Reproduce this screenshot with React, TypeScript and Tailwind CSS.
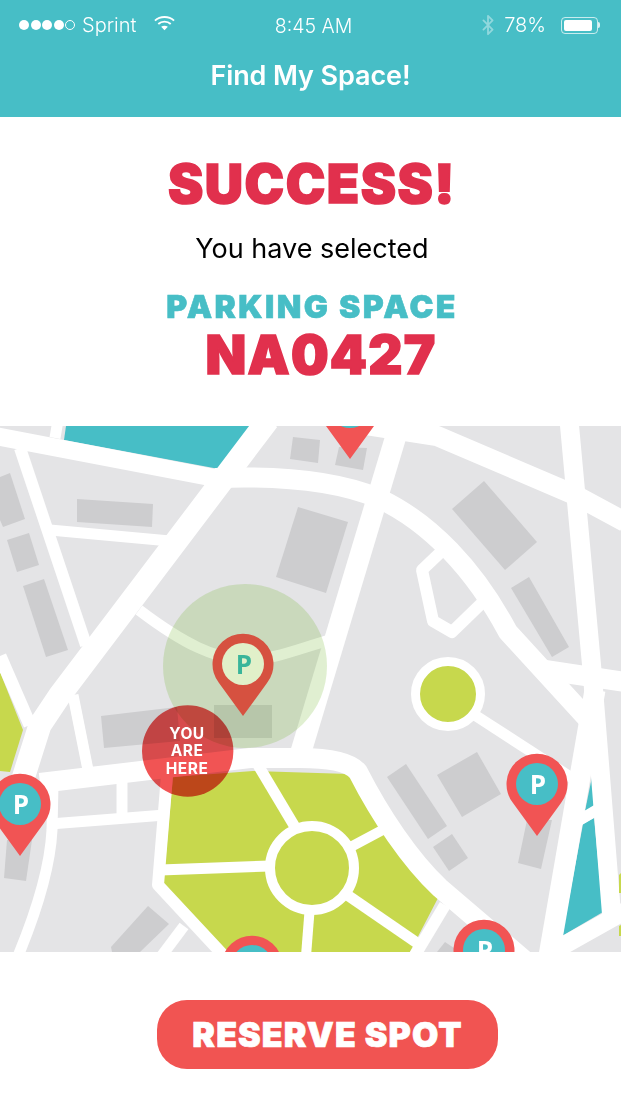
import { BluetoothIcon } from "lucide-react";

const buildings = [
  "293,437 320,440 318,463 290,459",
  "339,447 367,448 363,470 335,465",
  "77,499 153,504 152,527 77,522",
  "0,477 10,473 25,519 3,527 0,520",
  "7,540 29,533 39,565 17,572",
  "23,586 44,579 68,650 46,657",
  "298,507 348,522 326,593 276,577",
  "484,481 537,542 505,570 452,509",
  "529,577 569,647 552,657 511,588",
  "406,764 447,826 428,839 387,777",
  "477,752 501,794 462,817 437,775",
  "452,834 468,858 449,871 433,847",
  "552,820 541,869 518,863 527,820",
  "32,840 26,881 4,878 7,840",
  "445,942 460,952 437,952",
  "148,906 169,924 140,952 112,952 111,947",
  "101,716 177,707 180,741 104,748",
  "214,705 272,705 272,738 214,738",
];

const roads: [string, number][] = [
  ["M-5 436 L215 478", 18],
  ["M215 478 C265 476 330 478 378 498 C430 522 475 570 508 632 L595 727", 20],
  ["M268 420 L60 695 L40 725 L21 785", 23],
  ["M20 448 L86 645", 12],
  ["M58 420 L55 438", 11],
  ["M50 530 L170 541", 11],
  ["M0 656 L30 725", 13],
  ["M139 610 C185 645 215 658 243 660 C275 660 300 648 330 640", 11],
  ["M402 416 L300 755", 21],
  ["M360 424 L437 436 L575 495 L625 522", 20],
  ["M569 420 L592 670 L612 920", 19],
  ["M545 670 L625 682", 20],
  ["M444 549 L422 570 L433 621 L452 632 L485 600", 12],
  ["M470 712 L575 780", 11],
  ["M595 690 L549 956", 21],
  ["M550 953 L625 911", 18],
  ["M578 821 L600 808", 11],
  ["M40 783 L250 758 L300 758 C330 758 350 762 358 772 C380 815 410 860 440 888 L530 965", 20],
  ["M445 905 L415 955", 12],
  ["M258 765 L295 827", 11],
  ["M160 870 L270 866", 11],
  ["M345 850 L390 826", 10],
  ["M340 890 L420 945", 11],
  ["M310 905 L306 956", 10],
  ["M167 775 L158 885 L225 957", 12],
  ["M184 926 L160 958", 11],
  ["M53 785 L52 830 C50 870 35 915 18 956", 11],
  ["M50 824 L165 815", 11],
  ["M122 780 L122 820", 11],
  ["M73 695 L88 770", 11],
];

function Pin({ x, y, fill, inner, mark }: { x: number; y: number; fill: string; inner: string; mark?: string }) {
  return (
    <g transform={`translate(${x} ${y})`}>
      <path d="M0 52 L-24 19 A30.5 30.5 0 1 1 24 19 Z" fill={fill} />
      <circle r="21" fill={inner} />
      {mark && (
        <text x="1" y="9.5" textAnchor="middle" fontSize="26" fontWeight="700" fontFamily="'Open Sans', sans-serif" fill={mark}>
          P
        </text>
      )}
    </g>
  );
}

function CityMap() {
  return (
    <svg viewBox="0 426 621 526" className="block w-[621px] h-[526px] bg-[#e4e4e6]">
      <polygon points="66,426 252,426 219,469 64,440" fill="#47bec6" />
      <polygon points="592,777 585,811 594,806" fill="#47bec6" />
      <polygon points="583,824 562,936 603,912 594,818" fill="#47bec6" />
      <polygon points="0,672 23,730 10,772 0,771" fill="#c7d84d" />
      <polygon points="173,777 253,771 349,774 438,898 410,952 225,952 162,889 165,865" fill="#c7d84d" />
      {buildings.map((b) => (
        <polygon key={b} points={b} fill="#cdcdcf" />
      ))}
      {roads.map(([d, w]) => (
        <path key={d} d={d} fill="none" stroke="#fff" strokeWidth={w} strokeLinejoin="round" />
      ))}
      <polygon points="619,875 621,873 621,893 619,893" fill="#c7d84d" />
      <polygon points="619,926 621,925 621,936 619,936" fill="#c7d84d" />
      <circle cx="312" cy="868" r="42" fill="#c7d84d" stroke="#fff" strokeWidth="10" />
      <circle cx="448" cy="694" r="32.5" fill="#c7d84d" stroke="#fff" strokeWidth="9" />

      <circle cx="245" cy="666" r="82" fill="#5aaa0a" fillOpacity="0.19" />
      <Pin x={243} y={664} fill="#d65140" inner="#e1f0c9" mark="#3ab59a" />

      <circle cx="187.7" cy="751" r="45.7" fill="#f15454" className="mix-blend-multiply" />
      <g textAnchor="middle" fill="#fff" fontSize="15.5" fontWeight="700" letterSpacing="0.5" fontFamily="Inter, sans-serif">
        <text x="187" y="739">YOU</text>
        <text x="187" y="756">ARE</text>
        <text x="187" y="774">HERE</text>
      </g>

      <Pin x={350} y={407} fill="#f15454" inner="#47bec6" />
      <Pin x={20} y={804} fill="#f15454" inner="#47bec6" mark="#fff" />
      <Pin x={537} y={784} fill="#f15454" inner="#47bec6" mark="#fff" />
      <Pin x={252} y={966} fill="#f15454" inner="#47bec6" />
      <Pin x={484} y={950} fill="#f15454" inner="#47bec6" mark="#fff" />
    </svg>
  );
}

function StatusBar() {
  return (
    <div className="grid grid-cols-[1fr_auto_1fr] items-center h-[50px] pl-[19px] pr-[21px] text-[20px] font-light text-white">
      <div className="flex items-center">
        <div className="flex items-center gap-[1.5px]">
          <span className="w-[10px] h-[10px] rounded-full bg-white" />
          <span className="w-[10px] h-[10px] rounded-full bg-white" />
          <span className="w-[10px] h-[10px] rounded-full bg-white" />
          <span className="w-[10px] h-[10px] rounded-full bg-white" />
          <span className="w-[10px] h-[10px] rounded-full border border-white" />
        </div>
        <span className="ml-[7px]">Sprint</span>
        <svg viewBox="0 0 22 16" className="ml-[18px] mb-[4px] w-[21px] h-[16px]" fill="none" stroke="#fff" strokeWidth="2">
          <path d="M1 5.5 C6.5 0.5 15.5 0.5 21 5.5" />
          <path d="M4.5 9 C8 5.8 14 5.8 17.5 9" />
          <path d="M11 15.5 L7.5 11.8 C9.5 10.4 12.5 10.4 14.5 11.8 Z" fill="#fff" stroke="none" />
        </svg>
      </div>
      <span className="pt-[4px] pl-[8px] text-[19.5px]">8:45 AM</span>
      <div className="flex items-center justify-end">
        <BluetoothIcon className="w-[22px] h-[24px] text-white/40" />
        <span className="ml-[5px]">78%</span>
        <div className="ml-[15px] flex items-center">
          <div className="w-[37px] h-[17px] rounded-[4px] border border-white/70 p-[2px]">
            <div className="w-[28px] h-full rounded-[2px] bg-white" />
          </div>
          <div className="w-[2px] h-[6px] rounded-r-full bg-white/80" />
        </div>
      </div>
    </div>
  );
}

export default function App() {
  return (
    <div className="w-[621px] h-[1104px] bg-white overflow-hidden font-['Inter',sans-serif]">
      <header className="h-[117px] bg-[#47bec6]">
        <StatusBar />
        <h1 className="mt-[8px] text-center text-[27px] leading-[36px] font-semibold tracking-[-0.1px] text-white">Find My Space!</h1>
      </header>

      <section className="h-[309px] pt-[36px] pl-[3px] flex flex-col items-center text-center">
        <div className="text-[53px] leading-[62px] font-black tracking-[1.5px] text-[#e1304d] [-webkit-text-stroke:1.5px_#e1304d]">SUCCESS!</div>
        <p className="mt-[16px] text-[27px] leading-[36px] text-black">You have selected</p>
        <div className="mt-[20px] text-[32px] leading-[40px] font-black tracking-[2.4px] text-[#47bec6] [-webkit-text-stroke:0.6px_#47bec6]">PARKING SPACE</div>
        <div className="ml-[18px] text-[53px] leading-[56px] font-black tracking-[1.2px] text-[#e1304d] [-webkit-text-stroke:1.5px_#e1304d]">NA0427</div>
      </section>

      <CityMap />

      <div className="pt-[48px] pl-[157px]">
        <button className="w-[341px] h-[69px] rounded-[30px] bg-[#f15452] text-[34px] font-black tracking-[1.1px] text-white [-webkit-text-stroke:0.7px_#fff]">RESERVE SPOT</button>
      </div>
    </div>
  );
}
